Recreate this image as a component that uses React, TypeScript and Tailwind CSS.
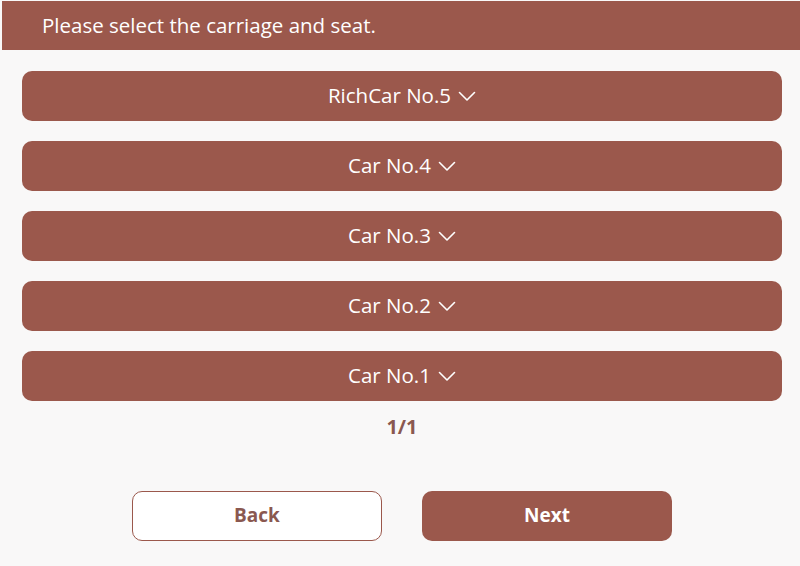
import React from "react";

const cars = ["RichCar No.5", "Car No.4", "Car No.3", "Car No.2", "Car No.1"];

function Chevron() {
  return (
    <svg width="18" height="12" viewBox="0 0 18 12" className="ml-[7px] mt-[2px]" fill="none">
      <path d="M1.5 2.5 L9 10 L16.5 2.5" stroke="#ffffff" strokeWidth="1.6" strokeLinecap="round" strokeLinejoin="round" />
    </svg>
  );
}

export default function App() {
  return (
    <div
      className="w-[800px] h-[566px] bg-[#f9f8f8] flex flex-col overflow-hidden"
      style={{ fontFamily: '"Open Sans", "Noto Sans", sans-serif' }}
    >
      <div className="mt-[1px] ml-[2px] h-[49px] bg-[#9b584c] flex items-center pl-[40px] pb-[1px] text-white text-[20.5px]">
        Please select the carriage and seat.
      </div>
      <div className="flex flex-col gap-[20px] pl-[22px] pr-[18px] pt-[21px]">
        {cars.map((c) => (
          <div
            key={c}
            className="h-[50px] rounded-[10px] bg-[#9b584c] flex items-center justify-center pb-[2px] text-white text-[20.5px]"
          >
            <span>{c}</span>
            <Chevron />
          </div>
        ))}
      </div>
      <div className="mt-[11px] pl-[4px] text-center text-[20px] font-bold text-[#8a5850]">1/1</div>
      <div className="mt-[49px] pl-[4px] flex justify-center gap-[40px]">
        <button className="w-[250px] h-[50px] rounded-[10px] border border-[#9b584c] bg-white text-[#8a5850] font-bold text-[19px] pb-[1px]">
          Back
        </button>
        <button className="w-[250px] h-[50px] rounded-[10px] bg-[#9b584c] text-white font-bold text-[19px] pb-[1px]">
          Next
        </button>
      </div>
    </div>
  );
}
